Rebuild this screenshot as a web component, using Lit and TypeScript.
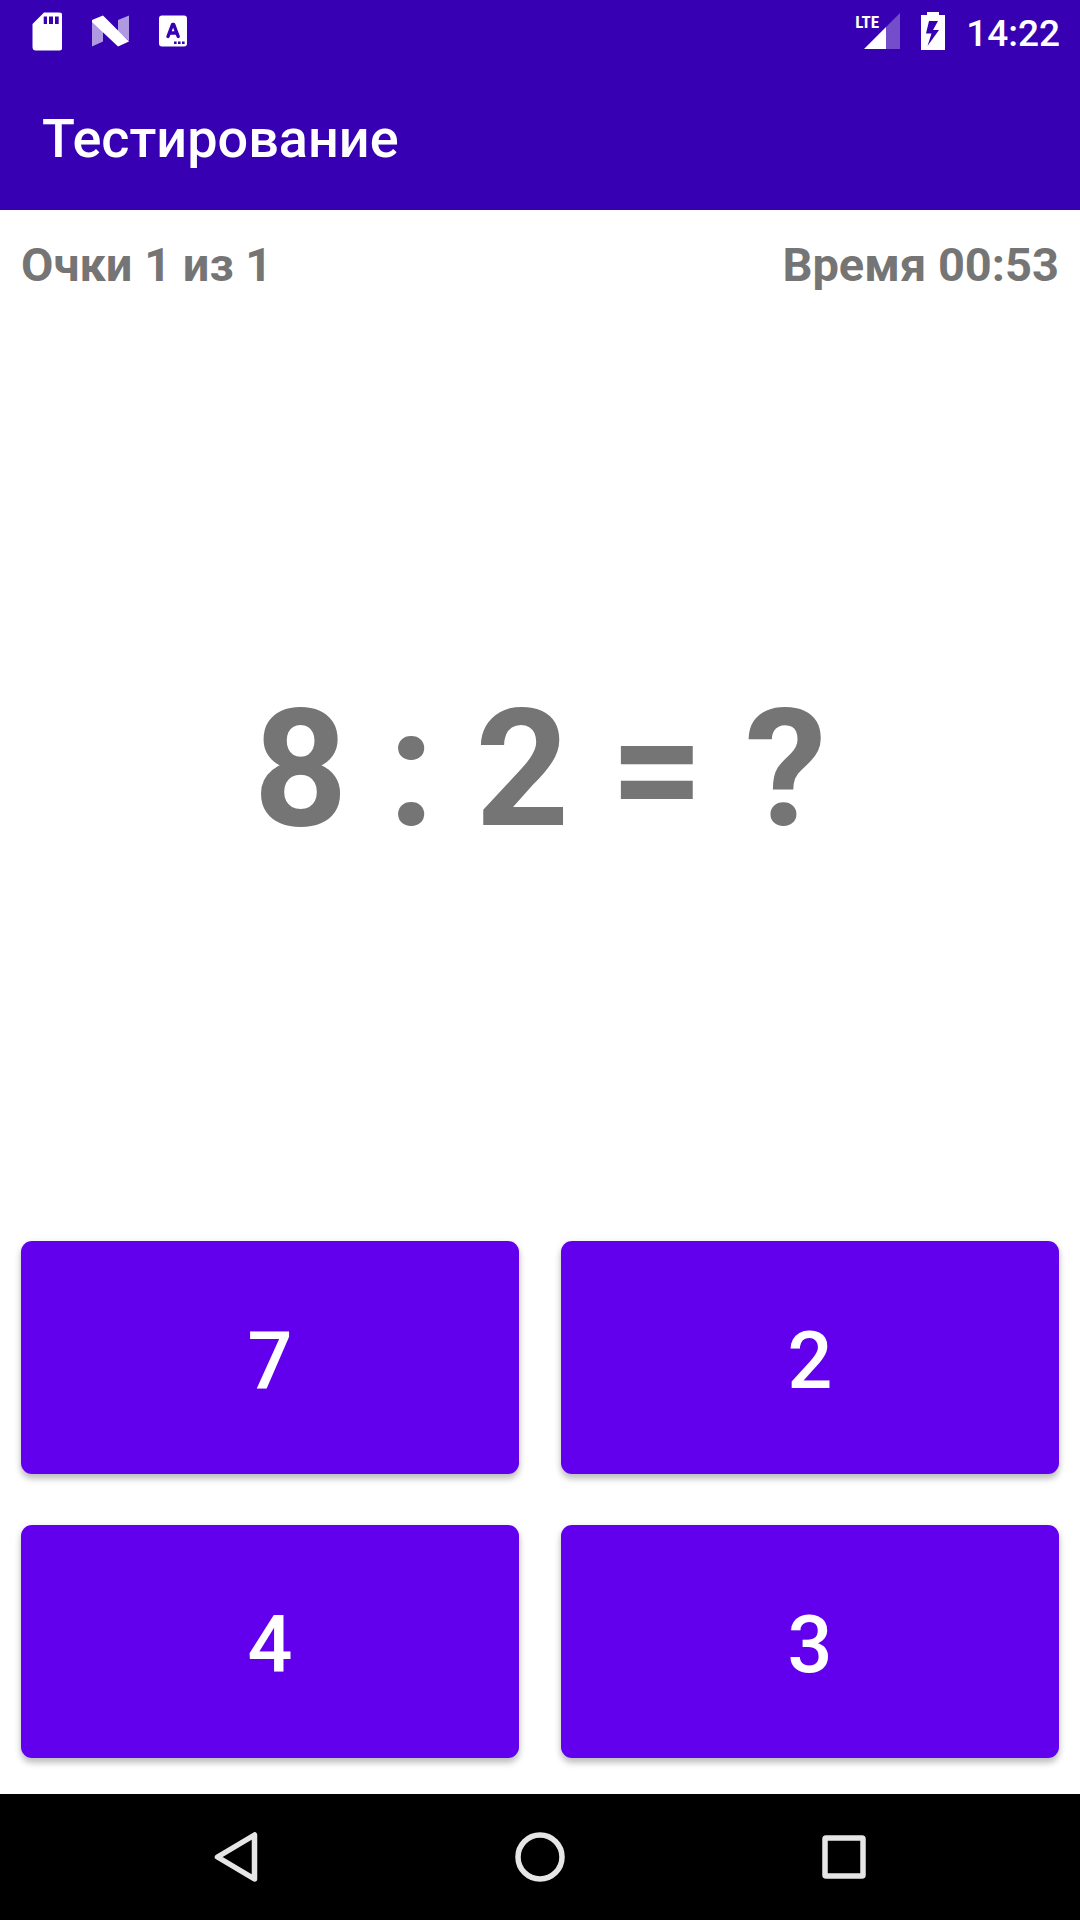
import { LitElement, html, css } from "lit";
import { customElement, property, state } from "lit/decorators.js";

@customElement("status-bar")
export class StatusBar extends LitElement {
  @property() time = "";

  static styles = css`
    :host {
      display: flex;
      align-items: center;
      justify-content: space-between;
      box-sizing: border-box;
      height: 63px;
      padding: 0 20px 1px 32px;
      background: #3700b3;
      color: #fff;
    }
    .group {
      display: flex;
      align-items: center;
    }
    .notices {
      gap: 30px;
    }
    .system {
      gap: 21px;
    }
    svg {
      display: block;
    }
    .cell {
      position: relative;
    }
    .lte {
      position: absolute;
      left: 0;
      top: 1px;
      font: 700 17px/18px "Roboto Condensed", "Liberation Sans Narrow", Roboto, sans-serif;
    }
    .clock {
      font: 500 37px/44px Roboto, sans-serif;
      padding-top: 5px;
    }
  `;

  render() {
    return html`
      <div class="group notices">
        <svg width="30" height="40" viewBox="0 0 30 40" aria-hidden="true">
          <path
            fill="#fff"
            fill-rule="evenodd"
            d="M12 1.500H27Q30.500 1.500 30.500 5V36Q30.500 39.500 27 39.500H4Q0.500 39.500 0.500 36V13ZM11.700 5.500V13H15V5.500ZM17 5.500V13H21V5.500ZM23 5.500V13H26.700V5.500Z"
          />
        </svg>
        <svg width="37" height="32" viewBox="0 0 37 32" aria-hidden="true">
          <path fill="#fff" fill-opacity=".6" d="M0 5L11 16V26.500L0 31.500ZM26 5L37 0.500V26L26 16Z" />
          <path fill="#fff" d="M0 5L11 0.500L37 26.500L26 31.500L0 7Z" />
        </svg>
        <svg width="28" height="32" viewBox="0 0 28 32" aria-hidden="true">
          <rect y=".5" width="28" height="31" rx="3" fill="#fff" />
          <path
            fill="none"
            stroke="#3700b3"
            stroke-width="3.400"
            stroke-linecap="round"
            stroke-linejoin="round"
            d="M9 21.500L13.500 9.500H14.700L19.200 21.500M11 18H17.200"
          />
          <path fill="#3700b3" d="M15 26.500h2.600v2.600h-2.600zM19 26.500h2.600v2.600h-2.600zM23 26.500h2.600v2.600h-2.600z" />
        </svg>
      </div>
      <div class="group system">
        <div class="cell">
          <svg width="45" height="38" viewBox="0 0 45 38" aria-hidden="true">
            <path fill="#fff" fill-opacity=".3" d="M45 1V37H31V15Z" />
            <path fill="#fff" d="M31 15V37H9Z" />
          </svg>
          <span class="lte">LTE</span>
        </div>
        <svg width="24" height="38" viewBox="0 0 24 38" aria-hidden="true">
          <path
            fill="#fff"
            fill-rule="evenodd"
            d="M6 0H18V3H24V38H0V3H6ZM8 9L5 21.500H10.500L6.500 34L18 18H12L17 9Z"
          />
        </svg>
        <time class="clock">${this.time}</time>
      </div>
    `;
  }
}

@customElement("nav-bar")
export class NavBar extends LitElement {
  static styles = css`
    :host {
      display: flex;
      justify-content: center;
      height: 126px;
      background: #000;
    }
    button {
      display: flex;
      align-items: center;
      justify-content: center;
      flex: 0 1 304px;
      margin: 0;
      padding: 0;
      border: 0;
      background: none;
      color: #e6e6e6;
    }
    svg {
      fill: none;
      stroke: currentColor;
      stroke-width: 5.500;
      stroke-linejoin: round;
    }
  `;

  render() {
    return html`
      <button type="button" aria-label="Назад">
        <svg width="54" height="54" viewBox="0 0 54 54"><path d="M8.500 27L45.500 5V49Z" /></svg>
      </button>
      <button type="button" aria-label="Домой">
        <svg width="54" height="54" viewBox="0 0 54 54"><circle cx="27" cy="27" r="22" /></svg>
      </button>
      <button type="button" aria-label="Обзор">
        <svg width="54" height="54" viewBox="0 0 54 54"><rect x="8" y="8" width="38" height="38" rx="1" /></svg>
      </button>
    `;
  }
}

@customElement("app-root")
export class AppRoot extends LitElement {
  @state() private score = 1;
  @state() private total = 1;
  @state() private timeLeft = "00:53";
  @state() private question = "8 : 2 = ?";
  @state() private answers = [7, 2, 4, 3];

  static styles = css`
    :host {
      display: flex;
      flex-direction: column;
      min-height: 100vh;
      background: #fff;
      color: #757575;
      font-family: Roboto, sans-serif;
    }
    .app-bar {
      display: flex;
      align-items: center;
      box-sizing: border-box;
      height: 147px;
      padding: 5px 42px 0;
      background: #3700b3;
      color: #fff;
    }
    h1 {
      margin: 0;
      font-size: 54px;
      line-height: 62px;
      font-weight: 500;
    }
    main {
      flex: 1;
      display: flex;
      flex-direction: column;
      padding: 21px 21px 36px;
    }
    .info {
      display: flex;
      justify-content: space-between;
      font-size: 47px;
      line-height: 67px;
      font-weight: 700;
    }
    .question {
      flex: 1;
      display: flex;
      align-items: center;
      justify-content: center;
      margin: 0;
      padding-bottom: 2px;
      font-size: 164px;
      line-height: 194px;
      font-weight: 700;
    }
    .answers {
      display: grid;
      grid-template-columns: 1fr 1fr;
      gap: 51px 42px;
    }
    .answer {
      height: 233px;
      margin: 0;
      padding: 6px 0 0;
      border: 0;
      border-radius: 11px;
      background: #6200ee;
      color: #fff;
      font: 500 79px/92px Roboto, sans-serif;
      box-shadow: 0 5px 6px rgba(0, 0, 0, 0.22), 0 1px 8px rgba(0, 0, 0, 0.08);
    }
  `;

  render() {
    return html`
      <status-bar time="14:22"></status-bar>
      <header class="app-bar"><h1>Тестирование</h1></header>
      <main>
        <div class="info">
          <span>Очки ${this.score} из ${this.total}</span>
          <span>Время ${this.timeLeft}</span>
        </div>
        <p class="question">${this.question}</p>
        <div class="answers">
          ${this.answers.map((n) => html`<button class="answer" type="button">${n}</button>`)}
        </div>
      </main>
      <nav-bar></nav-bar>
    `;
  }
}
